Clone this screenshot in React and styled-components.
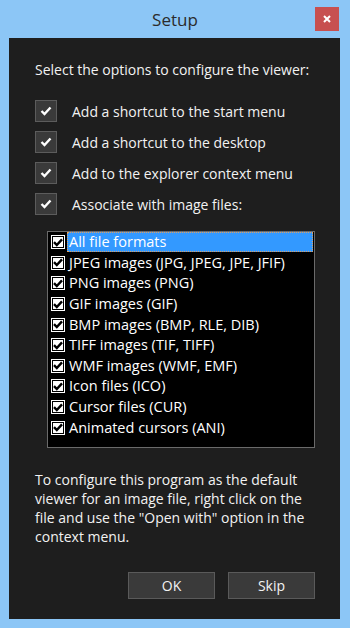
import React, { useState } from "react";
import styled, { createGlobalStyle } from "styled-components";

const GlobalStyle = createGlobalStyle`
  html, body {
    margin: 0;
    padding: 0;
    background: #8cc6f6;
  }
  * {
    box-sizing: border-box;
  }
`;

const Window = styled.div`
  width: 350px;
  height: 628px;
  display: flex;
  flex-direction: column;
  background: #8cc6f6;
  font-family: "Open Sans", "Noto Sans", sans-serif;
`;

const TitleBar = styled.div`
  height: 38px;
  display: grid;
  grid-template-columns: 1fr auto 1fr;
  align-items: center;
`;

const Title = styled.div`
  grid-column: 2;
  font-size: 17px;
  color: #2b2b2b;
  padding-top: 1px;
`;

const CloseButton = styled.button`
  grid-column: 3;
  justify-self: end;
  margin-right: 11px;
  width: 24px;
  height: 24px;
  padding: 0;
  border: none;
  background: #c75050;
  display: flex;
  align-items: center;
  justify-content: center;
  cursor: pointer;
`;

const Panel = styled.div`
  flex: 1;
  margin: 0 10px 9px 9px;
  background: #1e1e1e;
  padding: 22px 25px 0 26px;
  display: flex;
  flex-direction: column;
  color: #f2f2f2;
  font-size: 14px;
`;

const Heading = styled.div`
  line-height: 20px;
`;

const Options = styled.div`
  margin-top: 20px;
  display: flex;
  flex-direction: column;
  gap: 9px;
`;

const OptionRow = styled.label`
  display: flex;
  align-items: center;
  gap: 15px;
  height: 22px;
  line-height: 22px;
  padding-top: 1px;
`;

const BigBox = styled.span`
  width: 22px;
  height: 22px;
  flex: none;
  margin-top: -1px;
  background: #3a3a3a;
  border: 1px solid #5c5c5c;
  display: flex;
  align-items: center;
  justify-content: center;
`;

const ListBox = styled.div`
  margin: 16px 0 0 12px;
  width: 268px;
  height: 217px;
  border: 1px solid #6a6a6a;
  background: #000;
  padding: 0 1px 0 3px;
  font-size: 14.5px;
`;

const ListItem = styled.div`
  height: 20.6px;
  display: flex;
  align-items: center;
  gap: 2px;
  color: #fff;
`;

const ItemText = styled.span`
  flex: 1;
  height: 20px;
  line-height: 20px;
  padding-left: 2px;
  white-space: nowrap;
  background: ${(p) => (p.$selected ? "#3399ff" : "transparent")};
  outline: ${(p) => (p.$selected ? "1px dotted #e0a060" : "none")};
  outline-offset: -1px;
`;

const SmallBox = styled.span`
  width: 14px;
  height: 14px;
  flex: none;
  background: #fff;
  box-shadow: inset 0 0 0 1px #fff, inset 0 0 0 2px #000;
  display: flex;
  align-items: center;
  justify-content: center;
`;

const Note = styled.p`
  margin: 22px 0 0;
  line-height: 19px;
`;

const ButtonRow = styled.div`
  margin-top: 26px;
  display: flex;
  justify-content: flex-end;
  gap: 13px;
`;

const DialogButton = styled.button`
  width: 87px;
  height: 27px;
  background: #3a3a3a;
  border: 1px solid #5a5a5a;
  color: #f2f2f2;
  font-family: inherit;
  font-size: 14px;
  padding: 0;
  cursor: pointer;
`;

const BigCheck = () => (
  <svg width="12" height="10" viewBox="0 0 12 10">
    <polyline points="1.5,5 4.5,8 10.5,1.5" fill="none" stroke="#fff" strokeWidth="2.4" />
  </svg>
);

const SmallCheck = () => (
  <svg width="10" height="9" viewBox="0 0 10 9">
    <polyline points="1,4.2 3.8,7 9,1.4" fill="none" stroke="#000" strokeWidth="2.4" />
  </svg>
);

const options = [
  "Add a shortcut to the start menu",
  "Add a shortcut to the desktop",
  "Add to the explorer context menu",
  "Associate with image files:",
];

const formats = [
  "All file formats",
  "JPEG images (JPG, JPEG, JPE, JFIF)",
  "PNG images (PNG)",
  "GIF images (GIF)",
  "BMP images (BMP, RLE, DIB)",
  "TIFF images (TIF, TIFF)",
  "WMF images (WMF, EMF)",
  "Icon files (ICO)",
  "Cursor files (CUR)",
  "Animated cursors (ANI)",
];

export default function App() {
  const [selected, setSelected] = useState(0);
  return (
    <Window>
      <GlobalStyle />
      <TitleBar>
        <Title>Setup</Title>
        <CloseButton aria-label="Close">
          <svg width="8" height="8" viewBox="0 0 8 8">
            <path d="M1 1 L7 7 M7 1 L1 7" stroke="#fff" strokeWidth="2" />
          </svg>
        </CloseButton>
      </TitleBar>
      <Panel>
        <Heading>Select the options to configure the viewer:</Heading>
        <Options>
          {options.map((o) => (
            <OptionRow key={o}>
              <BigBox>
                <BigCheck />
              </BigBox>
              {o}
            </OptionRow>
          ))}
        </Options>
        <ListBox>
          {formats.map((f, i) => (
            <ListItem key={f} onClick={() => setSelected(i)}>
              <SmallBox>
                <SmallCheck />
              </SmallBox>
              <ItemText $selected={i === selected}>{f}</ItemText>
            </ListItem>
          ))}
        </ListBox>
        <Note>
          To configure this program as the default viewer for an image file,
          right click on the file and use the "Open with" option in the
          context menu.
        </Note>
        <ButtonRow>
          <DialogButton>OK</DialogButton>
          <DialogButton>Skip</DialogButton>
        </ButtonRow>
      </Panel>
    </Window>
  );
}
